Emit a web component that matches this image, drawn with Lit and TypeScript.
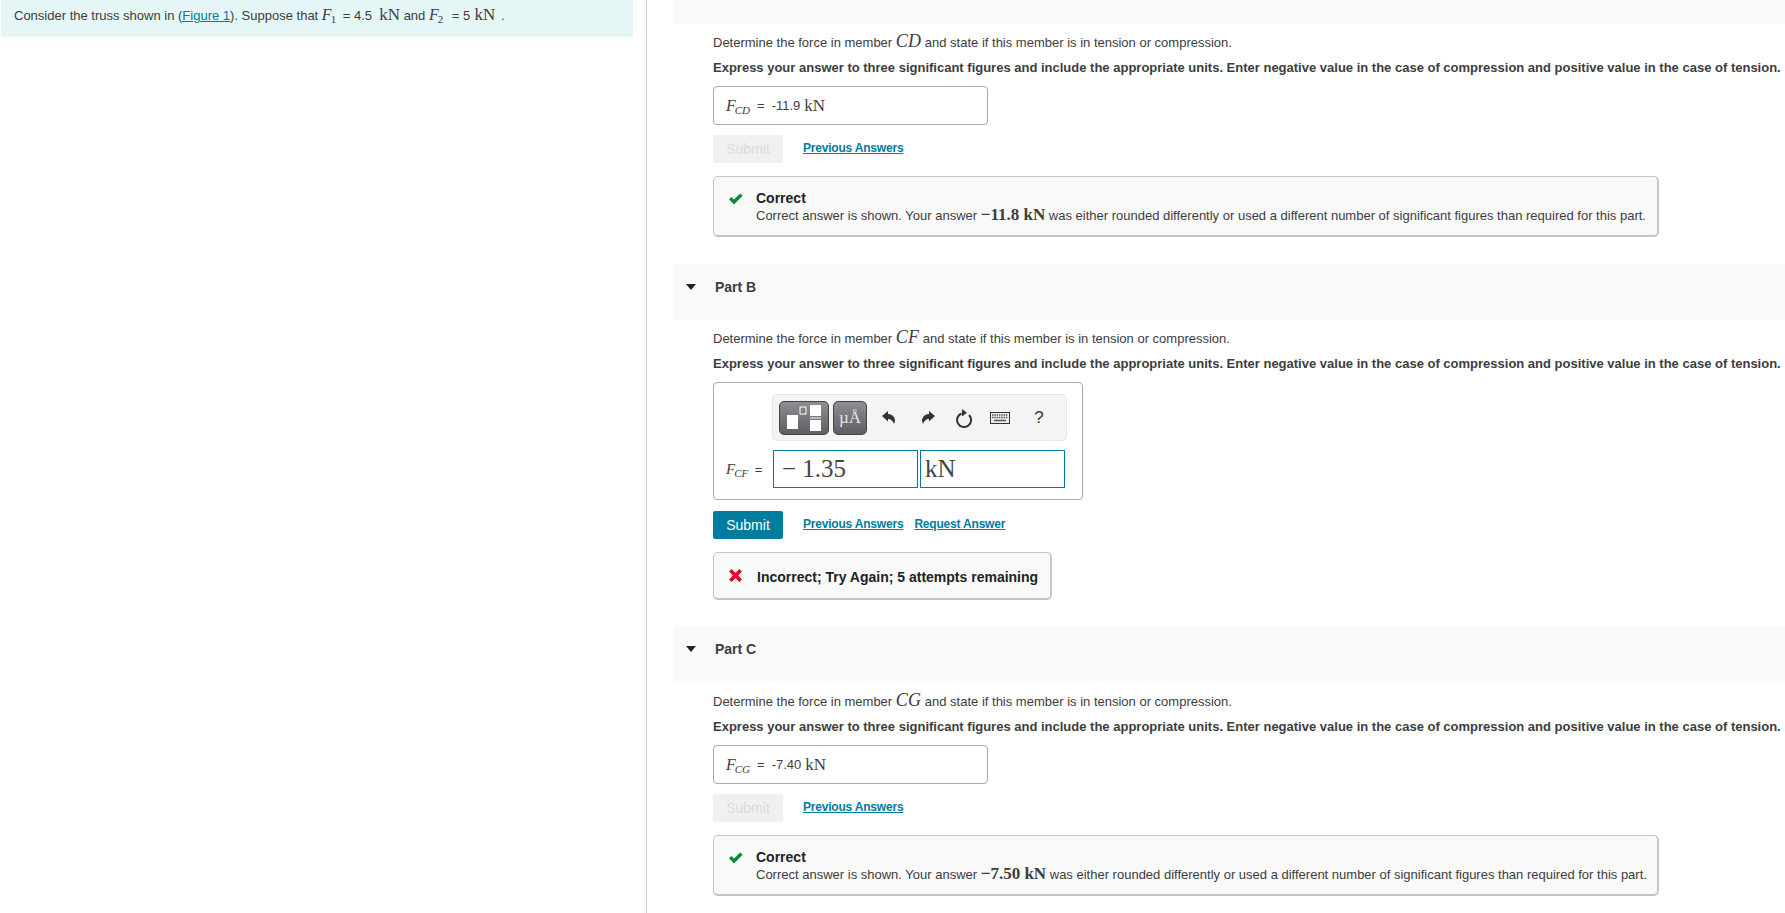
import { LitElement, html, css } from "lit";
import { customElement } from "lit/decorators.js";

const check = html`<svg class="fbicon" width="16" height="12" viewBox="0 0 16 12"><path d="M1 6.2 L3.4 3.9 L6 6.5 L12.2 0.6 L14.6 2.8 L6 11.4 Z" fill="#0a8a3c"/></svg>`;
const cross = html`<svg class="fbicon" width="15" height="15" viewBox="0 0 15 15"><path d="M1 3.6 L3.6 1 L7.5 4.9 L11.4 1 L14 3.6 L10.1 7.5 L14 11.4 L11.4 14 L7.5 10.1 L3.6 14 L1 11.4 L4.9 7.5 Z" fill="#e0062d"/></svg>`;

const express = "Express your answer to three significant figures and include the appropriate units. Enter negative value in the case of compression and positive value in the case of tension.";

@customElement("app-root")
export class AppRoot extends LitElement {
  static styles = css`
    :host { display: flex; height: 913px; overflow: hidden; font-family: "Liberation Sans", Arial, sans-serif; font-size: 13px; color: #3d3d3d; background: #fff; }
    .left { width: 647px; flex: none; box-sizing: border-box; border-right: 1px solid #c9cbe2; padding-left: 1px; }
    .intro { width: 632px; height: 37px; box-sizing: border-box; background: #e5f6f7; padding: 6px 0 0 13px; font-size: 13px; line-height: 17px; white-space: nowrap; }
    .intro .var { margin-right: 3px; }
    .intro .var.second { margin-right: 5px; }
    .intro .last { margin-left: -3px; margin-right: 2px; }
    a { color: #007c9f; text-decoration: underline; }
    .m { font-family: "Liberation Serif", serif; font-size: 17px; }
    .mb { font-weight: 700; }
    .big { font-style: italic; font-size: 18px; letter-spacing: 0.2px; }
    .var { font-family: "Liberation Serif", serif; font-style: italic; font-size: 16px; }
    sub { font-size: 11px; line-height: 0; vertical-align: -3px; font-family: "Liberation Serif", serif; font-style: italic; margin-left: -1px; }
    sub.n { font-style: normal; }
    .right { flex: 1; min-width: 0; padding-left: 26px; white-space: nowrap; }
    .band { height: 24px; background: #f9f9f9; }
    .head { position: relative; height: 56px; margin-top: 27px; background: #f9f9f9; display: flex; align-items: center; font-weight: 700; font-size: 14px; padding: 0 0 11px 42px; box-sizing: border-box; }
    .head.c { height: 57px; margin-top: 26px; }
    .tri { position: absolute; left: 13px; top: 20px; width: 0; height: 0; border-left: 5px solid transparent; border-right: 5px solid transparent; border-top: 6px solid #222; }
    .body { padding-left: 40px; }
    .q { height: 18px; line-height: 18px; margin-top: 8px; font-size: 13px; }
    .ex { height: 18px; line-height: 18px; margin-top: 9px; font-weight: 700; font-size: 13px; color: #3d3d3d; }
    .ans { box-sizing: border-box; width: 275px; height: 39px; margin-top: 9px; border: 1px solid #a9a9a9; border-radius: 4px; display: flex; align-items: center; padding-left: 12px; font-size: 13px; }
    .ans .var { margin-right: 7px; }
    .val { margin-left: 7px; margin-right: 4px; }
    .actions { display: flex; align-items: center; margin-top: 10px; height: 28px; }
    .actions.next { margin-top: 11px; }
    .sub { box-sizing: border-box; width: 70px; height: 28px; border-radius: 2px; font-size: 14px; display: flex; align-items: center; justify-content: center; background: #f0f0f0; color: #dcdcdc; }
    .sub.on { background: #007c9f; color: #fff; }
    .actions a { font-weight: 700; font-size: 12px; letter-spacing: -0.2px; margin-left: 20px; position: relative; top: -1px; }
    .actions a + a { margin-left: 11px; }
    .fb { box-sizing: border-box; margin-top: 13px; border: 1px solid #c7c7c7; border-bottom: 2px solid #c2c2c2; border-right: 2px solid #c7c7c7; border-radius: 5px; background: #f9f9f9; display: flex; color: #222; }
    .fb.c { width: 946px; height: 61px; padding: 14px 0 0 14px; }
    .fb.x { width: 339px; height: 48px; padding: 3px 0 0 14px; align-items: center; }
    .fb.c .fbicon { margin: 2px 12px 0 0; }
    .fb.x .fbicon { margin: -3px 14px 0 0; }
    .t { font-weight: 700; font-size: 14px; line-height: 15px; }
    .d { font-size: 13px; line-height: 17px; color: #3d3d3d; }
    .math { box-sizing: border-box; width: 370px; height: 118px; margin-top: 9px; border: 1px solid #a9a9a9; border-radius: 4px; padding: 11px 0 0 12px; }
    .tb { box-sizing: border-box; margin-left: 46px; width: 295px; height: 47px; background: #f4f4f4; border: 1px solid #e6e6e6; border-radius: 5px; display: flex; align-items: center; padding-left: 6px; }
    .tbtn { box-sizing: border-box; height: 34px; border: 1px solid #444; border-radius: 5px; background: linear-gradient(#8e8e92, #5f5f63); display: flex; align-items: center; justify-content: center; }
    .tbtn.a { width: 50px; }
    .tbtn.b { width: 34px; margin-left: 4px; color: #e4e4e4; font-family: "Liberation Serif", serif; font-size: 17px; }
    .tic { display: flex; justify-content: center; flex: none; }
    .undo { width: 43px; }
    .redo { width: 39px; margin-left: -1px; }
    .redo-c { width: 31px; }
    .kbd { width: 42px; }
    .help { font-size: 17px; color: #333; width: 36px; text-align: center; }
    .inrow { display: flex; align-items: center; margin-top: 9px; }
    .lab { width: 47px; flex: none; }
    .lab .var { font-size: 15px; margin-right: 3px; }
    .box { box-sizing: border-box; width: 145px; height: 38px; border: 1px solid #007c9f; font-family: "Liberation Serif", serif; font-size: 25px; color: #444; display: flex; align-items: center; padding-left: 8px; }
    .box + .box { margin-left: 2px; padding-left: 4px; }
  `;

  private q(v: string) {
    return html`<div class="q">Determine the force in member <span class="m big">${v}</span> and state if this member is in tension or compression.</div><div class="ex">${express}</div>`;
  }

  private ans(s: string, v: string) {
    return html`<div class="ans"><span class="var">F<sub>${s}</sub></span> = <span class="val">${v}</span><span class="m">kN</span></div>`;
  }

  private done(v: string) {
    return html`<div class="actions"><div class="sub">Submit</div><a href="#">Previous Answers</a></div>
      <div class="fb c">${check}<div><div class="t">Correct</div><div class="d">Correct answer is shown. Your answer <span class="m mb">−${v} kN</span> was either rounded differently or used a different number of significant figures than required for this part.</div></div></div>`;
  }

  render() {
    return html`
      <div class="left">
        <div class="intro">Consider the truss shown in (<a href="#">Figure 1</a>). Suppose that <span class="var">F<sub class="n">1</sub></span> = 4.5 &nbsp;<span class="m">kN</span> and <span class="var second">F<sub class="n">2</sub></span> = 5 &nbsp;<span class="m last">kN</span> .</div>
      </div>
      <div class="right">
        <div class="band"></div>
        <div class="body">
          ${this.q("CD")}
          ${this.ans("CD", "-11.9")}
          ${this.done("11.8")}
        </div>
        <div class="head"><span class="tri"></span>Part B</div>
        <div class="body">
          ${this.q("CF")}
          <div class="math">
            <div class="tb">
              <div class="tbtn a"><svg width="38" height="28" viewBox="0 0 38 28"><rect x="2" y="11" width="11" height="14" fill="#fff"/><rect x="15" y="3" width="6" height="7" fill="none" stroke="#fff"/><rect x="25" y="1" width="11" height="11" fill="#fff"/><rect x="25" y="13.5" width="11" height="1" fill="#fff"/><rect x="25" y="16" width="11" height="11" fill="#fff"/></svg></div>
              <div class="tbtn b">µÅ</div>
              <div class="tic undo"><svg width="15" height="16" viewBox="0 0 15 16"><path d="M1 6 L7 1 V4 C11 4 14 7 14 11 L13 14 C12 11 10 9 7 9 V11.5 Z" fill="#333"/></svg></div>
              <div class="tic redo"><svg width="15" height="16" viewBox="0 0 15 16"><path d="M14 6 L8 1 V4 C4 4 1 7 1 11 L2 14 C3 11 5 9 8 9 V11.5 Z" fill="#333"/></svg></div>
              <div class="tic redo-c"><svg width="18" height="20" viewBox="0 0 18 20"><path d="M14 7 A7 7 0 1 1 6.5 5.5" fill="none" stroke="#333" stroke-width="2"/><path d="M7 1 L12 4.8 L7 8.5 Z" fill="#333"/></svg></div>
              <div class="tic kbd"><svg width="20" height="12" viewBox="0 0 20 12"><rect x=".5" y=".5" width="19" height="11" fill="#eee" stroke="#333"/><path d="M2 3h16M2 5.5h16" stroke="#555" stroke-width="1.4" stroke-dasharray="1.5 .8"/><path d="M4 8.5h12" stroke="#555" stroke-width="1.5"/></svg></div>
              <div class="help">?</div>
            </div>
            <div class="inrow">
              <div class="lab"><span class="var">F<sub>CF</sub></span> =</div>
              <div class="box">− 1.35</div><div class="box">kN</div>
            </div>
          </div>
          <div class="actions next"><div class="sub on">Submit</div><a href="#">Previous Answers</a><a href="#">Request Answer</a></div>
          <div class="fb x">${cross}<div class="t">Incorrect; Try Again; 5 attempts remaining</div></div>
        </div>
        <div class="head c"><span class="tri"></span>Part C</div>
        <div class="body">
          ${this.q("CG")}
          ${this.ans("CG", "-7.40")}
          ${this.done("7.50")}
        </div>
      </div>`;
  }
}
